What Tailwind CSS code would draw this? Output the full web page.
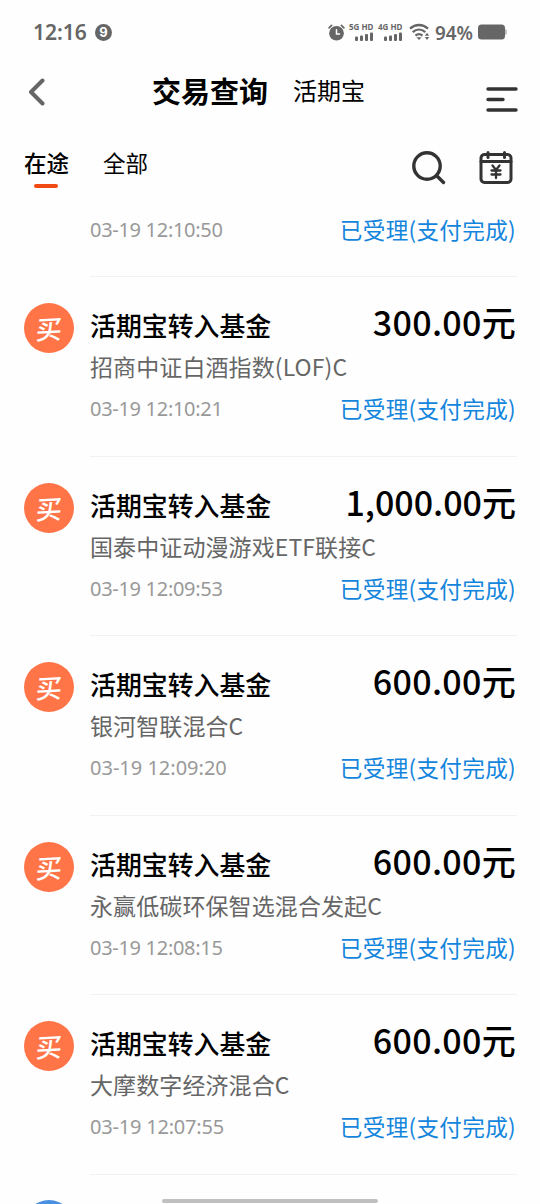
<!doctype html>
<html lang="zh-CN">
<head>
    <meta charset="UTF-8" />
    <meta name="viewport" content="width=device-width, initial-scale=1.0" />
    <title>交易查询</title>
    <script src="https://cdn.jsdelivr.net/npm/@tailwindcss/browser@4"></script>
</head>

<body class="bg-white">
<div class="relative flex h-[1204px] w-[540px] flex-col overflow-hidden bg-[#fefefe] font-['Noto_Sans_CJK_SC',sans-serif] whitespace-nowrap text-black">

    <!-- Status bar -->
    <div class="flex h-16 shrink-0 items-center pl-[33px] pr-[33px] text-[#666]">
        <span class="font-['Noto_Sans','Noto_Sans_CJK_SC',sans-serif] text-[21px] leading-6 font-semibold">12:16</span>
        <span class="ml-2 flex size-[17px] items-center justify-center rounded-full bg-[#666] font-['Inter',sans-serif] text-[13px] leading-none font-bold text-white">9</span>
        <div class="ml-auto flex items-center">
            <svg class="size-[17px]" viewBox="0 0 18 18" fill="none" stroke="#666" stroke-width="1.8" stroke-linecap="round">
                <circle cx="9" cy="9.8" r="7.8" fill="#666" stroke="none" />
                <path d="M1.2 4 3.8 1.400M16.800 4 14.200 1.400" />
                <path d="M9 6v4.500h3.200" stroke="#fff" stroke-width="1.600" />
            </svg>
            <div class="ml-1 flex h-[18px] w-[25px] flex-col justify-between">
                <span class="font-['Noto_Sans',sans-serif] text-[8px] leading-[8px] font-bold">5G HD</span>
                <svg class="ml-[6px] h-[9px] w-[18px]" viewBox="0 0 18 9" fill="#666">
                    <rect x="0" y="4.5" width="3" height="4.5" rx="1" />
                    <rect x="5" y="3.5" width="3" height="5.5" rx="1" />
                    <rect x="10" y="2" width="3" height="7" rx="1" />
                    <rect x="15" y="0.5" width="3" height="8.5" rx="1" />
                </svg>
            </div>
            <div class="ml-1 flex h-[18px] w-[25px] flex-col justify-between">
                <span class="font-['Noto_Sans',sans-serif] text-[8px] leading-[8px] font-bold">4G HD</span>
                <svg class="ml-[6px] h-[9px] w-[18px]" viewBox="0 0 18 9" fill="#666">
                    <rect x="0" y="4.5" width="3" height="4.5" rx="1" />
                    <rect x="5" y="3.5" width="3" height="5.5" rx="1" />
                    <rect x="10" y="2" width="3" height="7" rx="1" />
                    <rect x="15" y="0.5" width="3" height="8.5" rx="1" />
                </svg>
            </div>
            <svg class="ml-[6px] h-[18px] w-[21px]" viewBox="0 0 21 18" fill="none" stroke="#666" stroke-width="2.300">
                <path d="M1 5.600C6.500 .8 13.500 .8 19 5.600M3.700 9.200C7.500 5.800 12.500 5.800 16.300 9.200M6.500 12.700C8.600 10.800 11.400 10.800 13.500 12.700" />
                <path d="M7.400 14.200h5.200L10 17z" fill="#666" stroke="none" />
                <path d="M15.800 12.700 18 9.800l2.200 2.900zM15.800 14.100l2.200 2.900 2.200-2.900z" fill="#666" stroke="none" />
            </svg>
            <span class="ml-[5px] w-[38px] pt-[2px] font-['Noto_Sans',sans-serif] text-[18.800px] leading-6 font-semibold">94%</span>
            <svg class="ml-[5px] h-4 w-[29px]" viewBox="0 0 29 16">
                <path d="M26 5h1a2 2 0 0 1 2 2v2a2 2 0 0 1-2 2h-1z" fill="#c4c4c4" />
                <rect x="0" y="0.500" width="27" height="15" rx="3.500" fill="#666" />
            </svg>
        </div>
    </div>

    <!-- Title bar -->
    <header class="flex h-[68px] shrink-0 items-start pl-[27px] pr-[22px]">
        <svg class="mt-[13px] h-[30px] w-[18px]" viewBox="0 0 18 30" fill="none" stroke="#666" stroke-width="4" stroke-linecap="round" stroke-linejoin="round">
            <path d="M15.500 3.500 4 15l11.500 11.500" />
        </svg>
        <h1 class="ml-[107px] pt-[6px] text-[29px] leading-10 font-bold">交易查询</h1>
        <span class="ml-[25px] pt-[6px] text-[24px] leading-10">活期宝</span>
        <svg class="mt-[22px] ml-auto h-[27px] w-8" viewBox="0 0 32 27" fill="none" stroke="#333" stroke-width="3.400" stroke-linecap="round">
            <path d="M2 3h28M2 13.500h15M2 24h28" />
        </svg>
    </header>

    <!-- Tabs -->
    <nav class="flex h-[68px] shrink-0 items-start pl-6 pr-[27px]">
        <div class="flex flex-col items-center pt-[14px]">
            <span class="text-[22.500px] leading-8 font-medium">在途</span>
            <span class="mt-[6px] mr-[1px] h-1 w-6 rounded-full bg-[#f04a12]"></span>
        </div>
        <span class="ml-[34px] pt-[14px] text-[22.500px] leading-8">全部</span>
        <svg class="mt-[18px] ml-auto size-[36px]" viewBox="0 0 36 36" fill="none" stroke="#333" stroke-width="3.400" stroke-linecap="round">
            <circle cx="16" cy="16" r="13.200" />
            <path d="m26 26 6.500 6.500" />
        </svg>
        <svg class="ml-8 mt-[18px] h-9 w-[34px]" viewBox="0 0 34 36" fill="none" stroke="#333" stroke-width="3" stroke-linecap="round">
            <rect x="2" y="4.500" width="30" height="28" rx="3.500" />
            <path d="M2 11.500h30M9 2.500v5M25.500 2.500v5" />
            <path d="m13.500 15.500 3.500 4.500 3.500-4.500M12.500 20.500h9M12.500 24.500h9M17 20v8" stroke-width="2.300" />
        </svg>
    </nav>

    <!-- Transactions in progress -->
    <ul>
        <li class="pl-[90px] pr-[23px]">
            <div class="flex h-[77px] items-start justify-between border-b border-[#f2f2f2] pt-3">
                <time class="font-['Noto_Sans',sans-serif] text-[20px] leading-9 tracking-[-0.300px] text-[#999]">03-19 12:10:50</time>
                <span class="mr-[1px] text-[22.600px] leading-9 tracking-[0.300px] text-[#1485dc]">已受理(支付完成)</span>
            </div>
        </li>

        <li class="flex h-[179.500px] pl-6 pr-[23px]">
            <div class="mt-[26px] flex size-[50px] items-center justify-center rounded-full bg-[#ff7548]">
                <span class="-rotate-3 -skew-x-6 text-[26px] leading-none font-medium text-white">买</span>
            </div>
            <div class="ml-4 flex flex-1 flex-col border-b border-[#f2f2f2] pt-[25px]">
                <div class="flex h-10 items-center justify-between">
                    <h2 class="pt-[6px] text-[25.900px] leading-9 font-medium">活期宝转入基金</h2>
                    <p class="mr-[1px] text-[34px] leading-10 font-medium tracking-[0.300px]">300.00元</p>
                </div>
                <p class="h-12 text-[23px] leading-12 tracking-[0.100px] text-[#666]">招商中证白酒指数(LOF)C</p>
                <div class="flex h-[38px] items-center justify-between">
                    <time class="font-['Noto_Sans',sans-serif] text-[20px] tracking-[-0.300px] text-[#999]">03-19 12:10:21</time>
                    <span class="mr-[1px] text-[22.600px] tracking-[0.300px] text-[#1485dc]">已受理(支付完成)</span>
                </div>
            </div>
        </li>

        <li class="flex h-[179.500px] pl-6 pr-[23px]">
            <div class="mt-[26px] flex size-[50px] items-center justify-center rounded-full bg-[#ff7548]">
                <span class="-rotate-3 -skew-x-6 text-[26px] leading-none font-medium text-white">买</span>
            </div>
            <div class="ml-4 flex flex-1 flex-col border-b border-[#f2f2f2] pt-[25px]">
                <div class="flex h-10 items-center justify-between">
                    <h2 class="pt-[6px] text-[25.900px] leading-9 font-medium">活期宝转入基金</h2>
                    <p class="mr-[1px] text-[34px] leading-10 font-medium">1,000.00元</p>
                </div>
                <p class="h-12 text-[23px] leading-12 tracking-[0.100px] text-[#666]">国泰中证动漫游戏ETF联接C</p>
                <div class="flex h-[38px] items-center justify-between">
                    <time class="font-['Noto_Sans',sans-serif] text-[20px] tracking-[-0.300px] text-[#999]">03-19 12:09:53</time>
                    <span class="mr-[1px] text-[22.600px] tracking-[0.300px] text-[#1485dc]">已受理(支付完成)</span>
                </div>
            </div>
        </li>

        <li class="flex h-[179.500px] pl-6 pr-[23px]">
            <div class="mt-[26px] flex size-[50px] items-center justify-center rounded-full bg-[#ff7548]">
                <span class="-rotate-3 -skew-x-6 text-[26px] leading-none font-medium text-white">买</span>
            </div>
            <div class="ml-4 flex flex-1 flex-col border-b border-[#f2f2f2] pt-[25px]">
                <div class="flex h-10 items-center justify-between">
                    <h2 class="pt-[6px] text-[25.900px] leading-9 font-medium">活期宝转入基金</h2>
                    <p class="mr-[1px] text-[34px] leading-10 font-medium tracking-[0.300px]">600.00元</p>
                </div>
                <p class="h-12 text-[23px] leading-12 tracking-[0.100px] text-[#666]">银河智联混合C</p>
                <div class="flex h-[38px] items-center justify-between">
                    <time class="font-['Noto_Sans',sans-serif] text-[20px] text-[#999]">03-19 12:09:20</time>
                    <span class="mr-[1px] text-[22.600px] tracking-[0.300px] text-[#1485dc]">已受理(支付完成)</span>
                </div>
            </div>
        </li>

        <li class="flex h-[179.500px] pl-6 pr-[23px]">
            <div class="mt-[26px] flex size-[50px] items-center justify-center rounded-full bg-[#ff7548]">
                <span class="-rotate-3 -skew-x-6 text-[26px] leading-none font-medium text-white">买</span>
            </div>
            <div class="ml-4 flex flex-1 flex-col border-b border-[#f2f2f2] pt-[25px]">
                <div class="flex h-10 items-center justify-between">
                    <h2 class="pt-[6px] text-[25.900px] leading-9 font-medium">活期宝转入基金</h2>
                    <p class="mr-[1px] text-[34px] leading-10 font-medium tracking-[0.300px]">600.00元</p>
                </div>
                <p class="h-12 text-[23px] leading-12 tracking-[0.100px] text-[#666]">永赢低碳环保智选混合发起C</p>
                <div class="flex h-[38px] items-center justify-between">
                    <time class="font-['Noto_Sans',sans-serif] text-[20px] tracking-[-0.300px] text-[#999]">03-19 12:08:15</time>
                    <span class="mr-[1px] text-[22.600px] tracking-[0.300px] text-[#1485dc]">已受理(支付完成)</span>
                </div>
            </div>
        </li>

        <li class="flex h-[179.500px] pl-6 pr-[23px]">
            <div class="mt-[26px] flex size-[50px] items-center justify-center rounded-full bg-[#ff7548]">
                <span class="-rotate-3 -skew-x-6 text-[26px] leading-none font-medium text-white">买</span>
            </div>
            <div class="ml-4 flex flex-1 flex-col border-b border-[#f2f2f2] pt-[25px]">
                <div class="flex h-10 items-center justify-between">
                    <h2 class="pt-[6px] text-[25.900px] leading-9 font-medium">活期宝转入基金</h2>
                    <p class="mr-[1px] text-[34px] leading-10 font-medium tracking-[0.300px]">600.00元</p>
                </div>
                <p class="h-12 text-[23px] leading-12 tracking-[0.100px] text-[#666]">大摩数字经济混合C</p>
                <div class="flex h-[38px] items-center justify-between">
                    <time class="font-['Noto_Sans',sans-serif] text-[20px] tracking-[-0.200px] text-[#999]">03-19 12:07:55</time>
                    <span class="mr-[1px] text-[22.600px] tracking-[0.300px] text-[#1485dc]">已受理(支付完成)</span>
                </div>
            </div>
        </li>

        <li class="pl-6">
            <div class="mt-[25px] size-[50px] rounded-full bg-[#4a90e0]"></div>
        </li>
    </ul>

    <!-- Home indicator -->
    <div class="absolute bottom-[1px] left-[162px] h-1 w-[216px] rounded-full bg-[#c0c0c0]"></div>
</div>
</body>
</html>
